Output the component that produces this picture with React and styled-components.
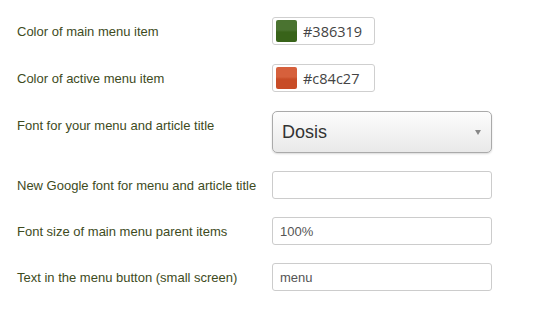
import React from "react";
import styled, { createGlobalStyle } from "styled-components";

const Global = createGlobalStyle`
body{
  margin:0;
  background:#fff;
}
`

const Form = styled.div`
display:grid;
grid-template-columns:255px 220px;
row-gap:18px;
padding:17px 0 0 17px;
align-items:start;
`

const Label = styled.div`
font-family:"Liberation Sans", Arial, sans-serif;
font-size:13px;
line-height:18px;
padding-top:6px;
color:#3e4b1d;
`

const ColorBox = styled.div`
box-sizing:border-box;
width:103px;
height:28px;
margin-bottom:1px;
border:1px solid #cfcfcf;
border-radius:3px;
display:flex;
align-items:center;
padding:0 3px;
gap:6px;
`

const Swatch = styled.div`
width:21px;
height:22px;
border-radius:2px;
background:linear-gradient(${(p)=>p.light} 0%, ${(p)=>p.light} 45%, ${(p)=>p.color} 55%, ${(p)=>p.color} 100%);
`

const Hex = styled.span`
font-family:"Open Sans", sans-serif;
font-size:14.5px;
color:#444;
`

const Select = styled.div`
box-sizing:border-box;
width:220px;
height:42px;
border:1px solid #aaa;
border-radius:5px;
background:linear-gradient(#fdfdfd 0%, #f3f3f3 50%, #e9e9e9 100%);
box-shadow:0 1px 2px rgba(0,0,0,0.15);
display:flex;
align-items:center;
justify-content:space-between;
padding:0 10px 0 9px;
font-family:"Liberation Sans", Arial, sans-serif;
font-size:18px;
color:#333;
`

const Arrow = styled.span`
width:0;
height:0;
border-left:3.5px solid transparent;
border-right:3.5px solid transparent;
border-top:5px solid #888;
`

const Input = styled.div`
box-sizing:border-box;
width:220px;
height:28px;
border:1px solid #ccc;
border-radius:3px;
display:flex;
align-items:center;
padding:0 7px;
font-family:"Liberation Sans", Arial, sans-serif;
font-size:13px;
color:#555;
`

const App = () =>{
    return(
        <>
            <Global/>
            <Form>
                <Label>Color of main menu item</Label>
                <ColorBox>
                    <Swatch color="#386319" light="#4a7330"/>
                    <Hex>#386319</Hex>
                </ColorBox>

                <Label>Color of active menu item</Label>
                <ColorBox>
                    <Swatch color="#c84c27" light="#d6603c"/>
                    <Hex>#c84c27</Hex>
                </ColorBox>

                <Label>Font for your menu and article title</Label>
                <Select>
                    <span>Dosis</span>
                    <Arrow/>
                </Select>

                <Label>New Google font for menu and article title</Label>
                <Input/>

                <Label>Font size of main menu parent items</Label>
                <Input>100%</Input>

                <Label>Text in the menu button (small screen)</Label>
                <Input>menu</Input>
            </Form>
        </>
    )
}

export default App
